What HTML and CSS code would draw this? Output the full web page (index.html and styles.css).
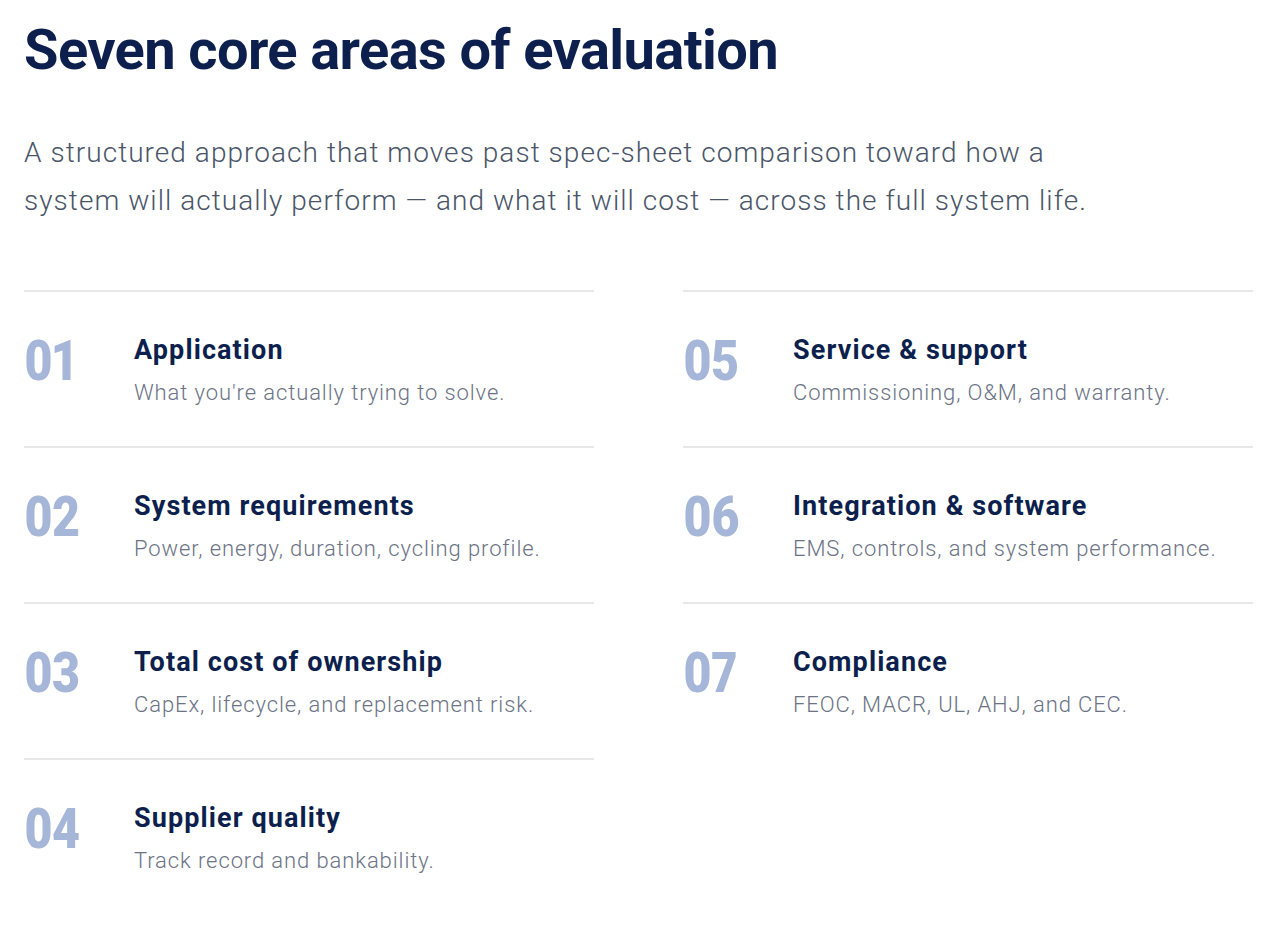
FILE: index.html
```html
<!DOCTYPE html>
<html lang="en">
<head>
<meta charset="utf-8">
<title>Seven core areas of evaluation</title>
<link rel="stylesheet" href="styles.css">
</head>
<body>
<section class="section">
  <h1 class="title">Seven core areas of evaluation</h1>
  <p class="lead">A structured approach that moves past spec-sheet comparison toward how a system will actually perform — and what it will cost — across the full system life.</p>
  <div class="grid">
    <div class="col">
      <div class="item"><div class="num">01</div><div class="body"><h3 class="name">Application</h3><p class="desc">What you're actually trying to solve.</p></div></div>
      <div class="item"><div class="num">02</div><div class="body"><h3 class="name">System requirements</h3><p class="desc">Power, energy, duration, cycling profile.</p></div></div>
      <div class="item"><div class="num">03</div><div class="body"><h3 class="name">Total cost of ownership</h3><p class="desc">CapEx, lifecycle, and replacement risk.</p></div></div>
      <div class="item"><div class="num">04</div><div class="body"><h3 class="name">Supplier quality</h3><p class="desc">Track record and bankability.</p></div></div>
    </div>
    <div class="col">
      <div class="item"><div class="num">05</div><div class="body"><h3 class="name">Service &amp; support</h3><p class="desc">Commissioning, O&amp;M, and warranty.</p></div></div>
      <div class="item"><div class="num">06</div><div class="body"><h3 class="name">Integration &amp; software</h3><p class="desc">EMS, controls, and system performance.</p></div></div>
      <div class="item"><div class="num">07</div><div class="body"><h3 class="name">Compliance</h3><p class="desc">FEOC, MACR, UL, AHJ, and CEC.</p></div></div>
    </div>
  </div>
</section>
</body>
</html>
```
FILE: styles.css
```css
html, body {
  margin: 0;
  padding: 0;
  background: #ffffff;
}
body {
  font-family: Roboto, "Liberation Sans", sans-serif;
}
.section {
  padding: 18px 0 0 24px;
  width: 1229px;
}
.title {
  margin: 0;
  font-size: 56px;
  line-height: 64px;
  font-weight: 700;
  color: #0c1f4d;
  letter-spacing: -0.6px;
}
.lead {
  margin: 47px 0 0;
  width: 1100px;
  font-size: 28px;
  line-height: 48px;
  font-weight: 300;
  color: #4a5568;
  letter-spacing: 1.05px;
}
.grid {
  margin-top: 65px;
  display: grid;
  grid-template-columns: 570px 570px;
  column-gap: 89px;
  align-items: start;
}
.item {
  border-top: 2px solid #e7e8ea;
  height: 154px;
  display: flex;
}
.num {
  width: 110px;
  flex: none;
  margin-top: 41px;
  font-size: 55px;
  line-height: 56px;
  font-weight: 900;
  color: #a5b6d8;
  letter-spacing: -1px;
  font-variant-numeric: proportional-nums;
  transform: scaleX(0.88);
  transform-origin: left center;
}
.body {
  margin-top: 42px;
}
.name {
  margin: 0;
  font-size: 27px;
  line-height: 32px;
  font-weight: 700;
  color: #0c1f4d;
  letter-spacing: 1.1px;
}
.desc {
  margin: 11px 0 0;
  font-size: 22px;
  line-height: 32px;
  font-weight: 300;
  color: #6b7385;
  letter-spacing: 0.9px;
}
```
